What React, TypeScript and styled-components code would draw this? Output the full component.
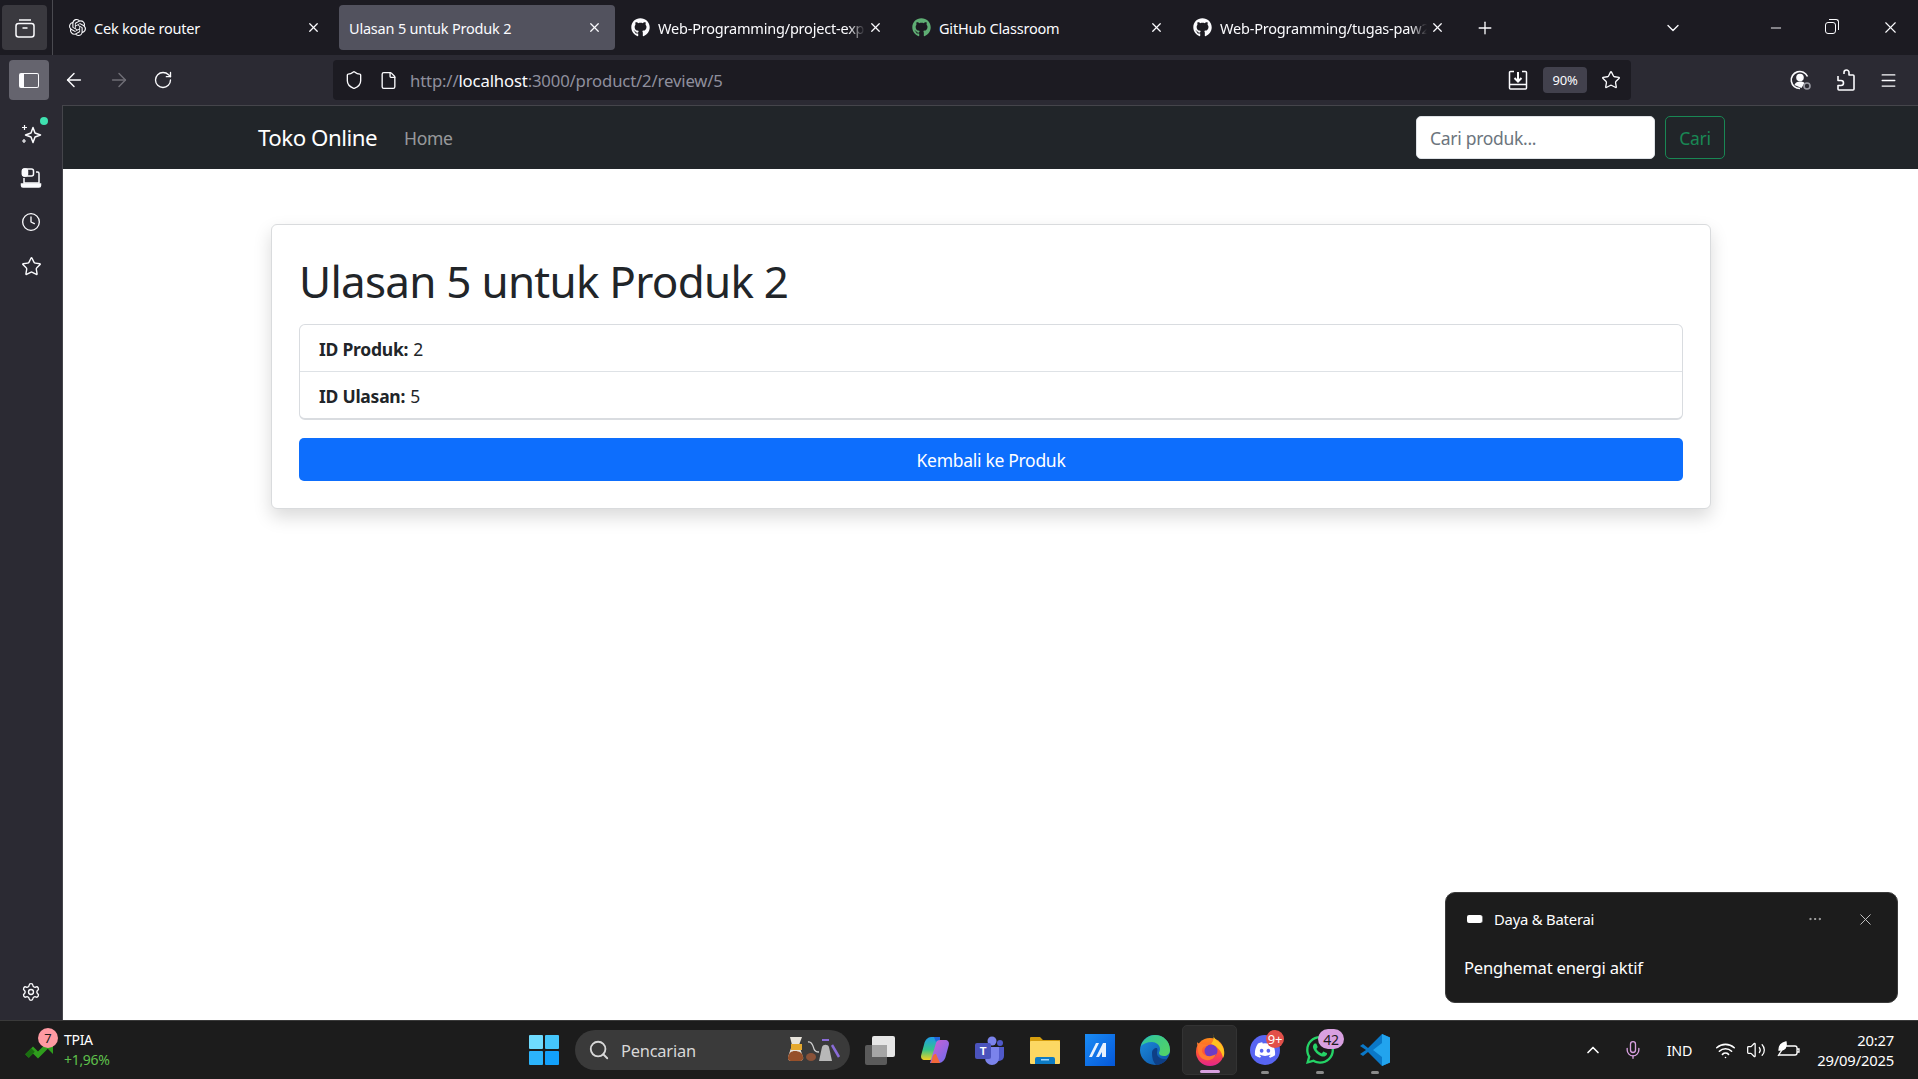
import styled, { createGlobalStyle } from 'styled-components';
import { ArrowLeft, ArrowRight, ChevronDown, ChevronUp, Clock, File, Menu, Minus, Mic, MoreHorizontal, Plus, RotateCw, Search, Settings, Shield, Star, Volume2, Wifi, X } from 'lucide-react';
import { FaDiscord, FaGithub, FaWhatsapp } from 'react-icons/fa';
import { SiOpenai } from 'react-icons/si';

const UI_FONT = '"Noto Sans", "Open Sans", sans-serif';

const GlobalStyle = createGlobalStyle`
  html, body { margin: 0; padding: 0; background: #fff; overflow: hidden; }
  * { box-sizing: border-box; }
  body { font-family: ${UI_FONT}; }
`;

const Screen = styled.div`
  width: 1918px;
  height: 1079px;
  display: flex;
  flex-direction: column;
  overflow: hidden;
`;

const TabBar = styled.div`
  height: 55px;
  flex: none;
  background: #1c1b22;
  display: flex;
  align-items: flex-start;
  padding: 5px 0 0 2px;
  color: #fbfbfe;
`;
const TabsButton = styled.div`
  width: 45px;
  height: 45px;
  background: #3a393f;
  border-radius: 4px;
  display: flex;
  align-items: center;
  justify-content: center;
`;
const TabDivider = styled.div`
  width: 1px;
  height: 55px;
  margin: -5px 5px 0 5px;
  background: #4a4a50;
`;
const Tabs = styled.div`
  display: flex;
  gap: 5px;
`;
const TabItem = styled.div<{ $active?: boolean }>`
  width: 276px;
  height: 45px;
  border-radius: 4px;
  background: ${(p) => (p.$active ? '#52525e' : 'transparent')};
  display: flex;
  align-items: center;
  padding: 0 13px 0 ${(p) => (p.$active ? '10px' : '11px')};
  gap: 8px;
  font-size: 14.5px;
  letter-spacing: -0.2px;
`;
const TabTitle = styled.span<{ $fade?: boolean }>`
  flex: 1;
  min-width: 0;
  margin-right: -5px;
  white-space: nowrap;
  overflow: hidden;
  ${(p) => p.$fade && 'mask-image: linear-gradient(to right, #000 92%, transparent 100%);'}
`;
const TabExtras = styled.div`
  display: flex;
  align-items: center;
  height: 45px;
  margin-left: 17px;
`;
const WindowControls = styled.div`
  display: flex;
  align-items: center;
  height: 45px;
  margin-left: 85px;
  gap: 41px;
  & > :last-child { margin-left: 4px; }
`;
const RestoreIcon = styled.div`
  width: 11px;
  height: 12px;
  border: 1.3px solid #fbfbfe;
  border-radius: 3px;
  position: relative;
  &::after {
    content: '';
    position: absolute;
    top: -4px;
    right: -4px;
    width: 9px;
    height: 10px;
    border-top: 1.3px solid #fbfbfe;
    border-right: 1.3px solid #fbfbfe;
    border-radius: 0 3px 0 0;
  }
`;

const Toolbar = styled.div`
  height: 50px;
  flex: none;
  background: #2b2a33;
  display: flex;
  align-items: center;
  padding: 5px 14px 5px 9px;
  color: #fbfbfe;
`;
const SidebarToggle = styled.div`
  width: 40px;
  height: 40px;
  background: #65646e;
  border-radius: 4px;
  display: flex;
  align-items: center;
  justify-content: center;
`;
const SidebarGlyph = styled.div`
  width: 20px;
  height: 15px;
  border: 1.5px solid #fbfbfe;
  border-left-width: 5px;
  border-radius: 2px;
  background: #65646e;
`;
const NavIcons = styled.div`
  display: flex;
  align-items: center;
  gap: 23px;
  padding-left: 14px;
  width: 284px;
  flex: none;
  & > * { flex: none; }
`;
const UrlBar = styled.div`
  width: 1298px;
  height: 40px;
  background: #1c1b22;
  border-radius: 4px;
  display: flex;
  align-items: center;
  padding: 0 10px 0 11px;
  gap: 15px;
`;
const UrlText = styled.div`
  flex: 1;
  margin-left: -3px;
  font-size: 16.7px;
  letter-spacing: -0.15px;
  color: #8f8f9d;
  white-space: nowrap;
  b { font-weight: 400; color: #fbfbfe; }
`;
const UrlActions = styled.div`
  display: flex;
  align-items: center;
`;
const ZoomBadge = styled.div`
  width: 44px;
  height: 26px;
  margin: 0 14px 0 15px;
  border-radius: 4px;
  background: #42414d;
  font-size: 13px;
  letter-spacing: -0.2px;
  display: flex;
  align-items: center;
  justify-content: center;
`;
const ToolbarRight = styled.div`
  display: flex;
  align-items: center;
  gap: 23px;
  margin-left: 158px;
`;

const Body = styled.div`
  flex: 1;
  display: flex;
  min-height: 0;
`;
const Sidebar = styled.div`
  width: 62px;
  flex: none;
  background: #2b2a33;
  display: flex;
  flex-direction: column;
  align-items: center;
  padding: 7px 0 6px;
  color: #fbfbfe;
`;
const SideItem = styled.div<{ $bottom?: boolean }>`
  width: 44px;
  height: 44px;
  display: flex;
  align-items: center;
  justify-content: center;
  position: relative;
  ${(p) => p.$bottom && 'margin-top: auto;'}
`;
const GreenDot = styled.span`
  position: absolute;
  top: 5px;
  right: 5px;
  width: 8px;
  height: 8px;
  border-radius: 50%;
  background: #3fe1b0;
`;

const Content = styled.div`
  flex: 1;
  position: relative;
  background: #fff;
  border-left: 1px solid #45454b;
  border-top: 1px solid #45454b;
`;
const Navbar = styled.nav`
  height: 63px;
  background: #212529;
  display: flex;
  align-items: center;
  padding: 0 193px 0 195px;
`;
const Brand = styled.span`
  font-size: 22.3px;
  letter-spacing: -0.5px;
  color: #fff;
`;
const NavLink = styled.span`
  margin-left: 27px;
  font-size: 17.5px;
  letter-spacing: -0.3px;
  color: rgba(255, 255, 255, 0.55);
`;
const SearchForm = styled.form`
  margin-left: auto;
  display: flex;
  gap: 10px;
`;
const SearchInput = styled.input`
  width: 239px;
  height: 43px;
  border: 1px solid #dee2e6;
  border-radius: 5px;
  padding: 0 13px;
  font-family: ${UI_FONT};
  font-size: 17.5px;
  letter-spacing: -0.3px;
  &::placeholder { color: #6c757d; opacity: 1; }
`;
const SearchButton = styled.button`
  width: 60px;
  height: 43px;
  background: transparent;
  border: 1px solid #198754;
  border-radius: 5px;
  color: #198754;
  font-family: ${UI_FONT};
  font-size: 17.5px;
  letter-spacing: -0.3px;
  padding: 0;
`;

const Card = styled.section`
  width: 1440px;
  height: 285px;
  margin: 55px 0 0 208px;
  background: #fff;
  border: 1px solid #d9dbdd;
  border-radius: 6px;
  padding: 27px 27px;
  box-shadow: 0 8px 18px rgba(0, 0, 0, 0.15);
`;
const Title = styled.h1`
  margin: 0 0 18px 0;
  height: 54px;
  line-height: 59px;
  font-size: 44px;
  font-weight: 400;
  letter-spacing: -0.75px;
  color: #212529;
  white-space: nowrap;
`;
const InfoList = styled.ul`
  list-style: none;
  margin: 0 0 18px;
  padding: 0;
  border: 1px solid #d9dce0;
  border-bottom-width: 2px;
  border-radius: 6px;
`;
const InfoItem = styled.li`
  height: 46px;
  padding: 2px 19px 0;
  display: flex;
  align-items: center;
  gap: 5px;
  font-size: 17.5px;
  letter-spacing: -0.25px;
  color: #212529;
  & + & { border-top: 1px solid #dee2e6; height: 47px; }
  strong { font-weight: 700; }
`;
const BackButton = styled.button`
  width: 100%;
  height: 43px;
  border: 0;
  border-radius: 5px;
  background: #0d6efd;
  color: #fff;
  font-family: ${UI_FONT};
  font-size: 17.5px;
  letter-spacing: -0.3px;
`;

const Toast = styled.div`
  position: absolute;
  right: 20px;
  bottom: 17px;
  width: 453px;
  height: 111px;
  background: #1c1c1c;
  border: 1px solid #3a3a3a;
  border-radius: 10px;
  color: #fff;
  padding: 0 20px;
  display: flex;
  flex-direction: column;
`;
const ToastHead = styled.div`
  display: flex;
  align-items: center;
  height: 52px;
  font-size: 14.8px;
  letter-spacing: -0.2px;
`;
const ToastTitle = styled.span`
  flex: 1;
  margin-left: 12px;
`;
const ToastActions = styled.div`
  display: flex;
  align-items: center;
  gap: 33px;
  margin-right: 2px;
  color: #c8c8c8;
`;
const ToastBody = styled.div`
  font-size: 16.6px;
  letter-spacing: -0.2px;
  margin: 11px 0 0 -2px;
`;
const BatteryGlyph = styled.span`
  margin-left: 1px;
  width: 15px;
  height: 8px;
  background: #fff;
  border-radius: 2px;
  box-shadow: 1.5px 0 0 -0.5px #777;
`;

const Taskbar = styled.footer`
  height: 59px;
  flex: none;
  background: #1c1c1c;
  border-top: 1px solid #3a3a3a;
  display: flex;
  align-items: center;
  color: #fff;
`;
const Widget = styled.div`
  width: 529px;
  flex: none;
  display: flex;
  align-items: center;
  padding-left: 25px;
  gap: 11px;
`;
const WidgetIcon = styled.div`
  position: relative;
  width: 28px;
  height: 36px;
  padding-top: 11px;
`;
const WidgetBadge = styled.span`
  position: absolute;
  left: 13px;
  top: -4px;
  width: 20px;
  height: 20px;
  border-radius: 50%;
  background: #ff9aa2;
  color: #1c1c1c;
  font-size: 13px;
  display: flex;
  align-items: center;
  justify-content: center;
`;
const WidgetText = styled.div`
  font-size: 14px;
  line-height: 20px;
  letter-spacing: -0.3px;
  small { display: block; font-size: 14px; color: #5fc04c; }
`;
const StartButton = styled.div`
  width: 30px;
  height: 30px;
  flex: none;
  display: grid;
  grid-template-columns: 1fr 1fr;
  gap: 1.5px;
`;
const StartPane = styled.span<{ $c: string }>`
  background: ${(p) => p.$c};
  border-radius: 1px;
`;
const SearchPill = styled.div`
  width: 275px;
  height: 40px;
  flex: none;
  margin-left: 16px;
  border-radius: 20px;
  background: #3a3a3a;
  display: flex;
  align-items: center;
  padding: 0 8px 0 13px;
  gap: 11px;
  font-size: 16.4px;
  letter-spacing: -0.2px;
  color: #d8d8d8;
`;
const PillText = styled.span`
  flex: 1;
`;
const Apps = styled.div`
  display: flex;
  align-items: center;
  margin-left: 2px;
`;
const AppSlot = styled.div<{ $active?: boolean }>`
  width: 55px;
  height: 50px;
  position: relative;
  display: flex;
  align-items: center;
  justify-content: center;
  border-radius: 5px;
  ${(p) => p.$active && 'background: #2a2a2a; border: 1px solid #333;'}
`;
const RunDot = styled.span<{ $active?: boolean }>`
  position: absolute;
  bottom: 1px;
  left: 50%;
  transform: translateX(-50%);
  width: ${(p) => (p.$active ? '20px' : '8px')};
  height: 3px;
  border-radius: 2px;
  background: ${(p) => (p.$active ? '#d8a0e0' : '#8a8a8a')};
`;
const AppBadge = styled.span<{ $bg: string; $wide?: boolean }>`
  position: absolute;
  top: ${(p) => (p.$wide ? '4px' : '5px')};
  right: ${(p) => (p.$wide ? '3px' : '8px')};
  min-width: ${(p) => (p.$wide ? '26px' : '18px')};
  height: ${(p) => (p.$wide ? '20px' : '18px')};
  border-radius: 10px;
  background: ${(p) => p.$bg};
  color: ${(p) => (p.$wide ? '#1c1c1c' : '#fff')};
  font-size: ${(p) => (p.$wide ? '14px' : '13px')};
  letter-spacing: -0.3px;
  display: flex;
  align-items: center;
  justify-content: center;
`;
const Tray = styled.div`
  display: flex;
  align-items: center;
  margin-left: auto;
  padding-right: 24px;
  color: #fff;
`;
const TrayLang = styled.span`
  font-size: 14.3px;
  letter-spacing: -0.2px;
  margin: 0 23px 0 24px;
`;
const TrayIcons = styled.div`
  display: flex;
  align-items: center;
  gap: 10px;
`;
const Clocks = styled.div`
  margin-left: 17px;
  font-size: 14.8px;
  line-height: 20px;
  letter-spacing: -0.2px;
  text-align: right;
`;
const DiscordCircle = styled.span`
  width: 30px;
  height: 30px;
  border-radius: 50%;
  background: #5865f2;
  display: flex;
  align-items: center;
  justify-content: center;
`;

const SparkIcon = () => (
  <svg width="22" height="22" viewBox="0 0 22 22" fill="none" stroke="#fbfbfe" strokeWidth="1.5" strokeLinejoin="round">
    <path d="M13 4.500l2 5.500 5.500 2-5.500 2-2 5.500-2-5.500-5.500-2 5.500-2z" />
    <path d="M4.500 2v5M2 4.500h5M4 16v4M2 18h4" strokeWidth="1.2" />
  </svg>
);

const SyncIcon = () => (
  <svg width="22" height="22" viewBox="0 0 22 22" fill="none" stroke="#fbfbfe" strokeWidth="1.5">
    <rect x="2.500" y="2" width="11" height="7" rx="2" />
    <rect x="2.500" y="2" width="5" height="7" rx="2" fill="#fbfbfe" />
    <path d="M16 5h1.500a1.500 1.500 0 011.500 1.500V16H4v-5" />
    <path d="M1.500 17h19v1.500a1.500 1.500 0 01-1.500 1.500H3a1.500 1.500 0 01-1.500-1.500z" fill="#fbfbfe" />
  </svg>
);

const TabsGlyph = () => (
  <svg width="20" height="20" viewBox="0 0 20 20" fill="none" stroke="#fbfbfe" strokeWidth="1.5">
    <rect x="1" y="5.500" width="18" height="13.500" rx="2.500" />
    <path d="M4 2h12M7.500 10h5" />
  </svg>
);

const DownloadIcon = () => (
  <svg width="20" height="20" viewBox="0 0 20 20" fill="none" stroke="#fbfbfe" strokeWidth="1.500">
    <path d="M6 1.500H2.500a1 1 0 00-1 1V18a1 1 0 001 1h15a1 1 0 001-1V2.500a1 1 0 00-1-1H14M1.500 14.500h17" />
    <path d="M10 2v8.500M6.500 8l3.500 3.500L13.500 8" strokeWidth="2" />
  </svg>
);

const AccountIcon = () => (
  <svg width="24" height="24" viewBox="0 0 24 24" fill="none" stroke="#fbfbfe" strokeWidth="1.600">
    <path d="M18.500 8.500A8.500 8.500 0 1011 20.500" />
    <circle cx="11" cy="9.500" r="3" fill="#fbfbfe" />
    <path d="M5.500 17c1-3 3-3.500 5.500-3.500s3.500.5 4.500 1.500L12.500 20z" fill="#fbfbfe" stroke="none" />
    <circle cx="18" cy="18" r="3" stroke="#9a9aa3" />
  </svg>
);

const PuzzleIcon = () => (
  <svg width="20" height="22" viewBox="0 0 20 22" fill="none" stroke="#fbfbfe" strokeWidth="1.600" strokeLinejoin="round">
    <path d="M8 5V3.500a2.500 2.500 0 015 0V6h4a1 1 0 011 1v13a1 1 0 01-1 1H3a1 1 0 01-1-1v-3.500h3a2.500 2.500 0 000-5H2V7" />
  </svg>
);

const LeafBattery = () => (
  <svg width="24" height="20" viewBox="0 0 24 20" fill="none" stroke="#fff" strokeWidth="1.300">
    <path d="M10 6h9a2 2 0 012 2v5a2 2 0 01-2 2H3" />
    <path d="M21 9h2v3h-2" />
    <path d="M3 10c0-5 3-7 7-8 1 5-1 8-5 8z" fill="#fff" />
    <path d="M2 16l6-9" />
  </svg>
);

const TrendIcon = () => (
  <svg width="28" height="16" viewBox="0 0 28 16" fill="none" style={{ display: 'block' }}>
    <path d="M2 13l6-6 5 5 9-9" stroke="#2f9e1d" strokeWidth="5" />
    <path d="M2 13l6-6" stroke="#1a6e10" strokeWidth="5" />
    <path d="M18 1h10v10z" fill="#2f9e1d" />
  </svg>
);

const TaskViewIcon = () => (
  <svg width="32" height="32" viewBox="0 0 32 32">
    <rect x="1" y="11" width="22" height="20" rx="2" fill="#5a5a5a" />
    <rect x="8" y="2" width="23" height="21" rx="2" fill="#e6e6e6" />
    <rect x="8" y="11" width="15" height="12" fill="#a5a5a5" />
  </svg>
);

const CopilotIcon = () => (
  <svg width="30" height="30" viewBox="0 0 30 30">
    <defs>
      <linearGradient id="cp1" x1="0" y1="0" x2="0" y2="1"><stop offset="0" stopColor="#1f9be8" /><stop offset="0.55" stopColor="#33c48a" /><stop offset="1" stopColor="#f5d020" /></linearGradient>
      <linearGradient id="cp2" x1="0" y1="0" x2="1" y2="1"><stop offset="0" stopColor="#d35fd0" /><stop offset="1" stopColor="#6a6cf0" /></linearGradient>
    </defs>
    <path d="M11 2h9l-6 20c-.6 2-2 3-4 3H5c-3 0-4.500-2-3.800-5l3-11C5 5 8 2 11 2z" fill="url(#cp1)" />
    <path d="M19 28h-9l6-20c.6-2 2-3 4-3h5c3 0 4.500 2 3.800 5l-3 11C25 25 22 28 19 28z" fill="url(#cp2)" />
    <path d="M11 28l2-7c.5-1.500 2-2 3-2l4 9z" fill="#f2683a" />
    <path d="M20 2h-6l2 5c.5-1.500 2-2 4-2z" fill="#2266dd" />
  </svg>
);

const TeamsIcon = () => (
  <svg width="32" height="32" viewBox="0 0 32 32">
    <circle cx="18" cy="7" r="4.500" fill="#7b83eb" />
    <circle cx="26" cy="9" r="3" fill="#5059c9" />
    <path d="M21 13h9v9a5 5 0 01-5 5h-4z" fill="#5059c9" />
    <path d="M10 13h15v11a7 7 0 01-14 0z" fill="#7b83eb" />
    <rect x="1" y="9" width="16" height="16" rx="2" fill="#4b53bc" />
    <text x="9" y="21" textAnchor="middle" fontFamily="Liberation Sans" fontSize="11" fontWeight="700" fill="#fff">T</text>
  </svg>
);

const FolderIcon = () => (
  <svg width="30" height="30" viewBox="0 0 30 30">
    <path d="M0 3a1 1 0 011-1h9l3 3h17v6H0z" fill="#d69e0e" />
    <rect x="0" y="6" width="30" height="23" rx="1" fill="#fcd863" />
    <path d="M5 29v-5a2 2 0 012-2h16a2 2 0 012 2v5z" fill="#0d7bc4" />
    <rect x="11" y="24" width="8" height="1.500" fill="#9fd8ff" />
  </svg>
);

const MaIcon = () => (
  <svg width="30" height="32" viewBox="0 0 30 32">
    <defs>
      <linearGradient id="ma" x1="0" y1="0" x2="1" y2="1"><stop offset="0" stopColor="#1a8cf5" /><stop offset="1" stopColor="#0457d9" /></linearGradient>
    </defs>
    <rect width="30" height="32" fill="url(#ma)" />
    <path d="M4 23l7-14h3l-7 14zM11 23l7-14h3v14h-4v-5l-3 5z" fill="#fff" opacity="0.9" />
  </svg>
);

const EdgeIcon = () => (
  <svg width="30" height="30" viewBox="0 0 30 30">
    <defs>
      <linearGradient id="ed1" x1="0" y1="0" x2="1" y2="0.600"><stop offset="0" stopColor="#2bc4a5" /><stop offset="1" stopColor="#50d16a" /></linearGradient>
      <linearGradient id="ed2" x1="0" y1="0" x2="1" y2="1"><stop offset="0" stopColor="#1d8fe0" /><stop offset="1" stopColor="#0b4fa3" /></linearGradient>
    </defs>
    <circle cx="15" cy="15" r="15" fill="url(#ed2)" />
    <path d="M1 11C3 4 9 0 15 0c8 0 15 6 15 15 0 4-3 6-6 6-3 0-5-1-5-3 0-1 1-2 1-4 0-4-4-7-8-7-5 0-9 2-11 4z" fill="url(#ed1)" />
    <path d="M12 18c0-3 2-5 5-5 1 2 0 3 0 5 0 4 4 6 8 6l2 .500C24 28 20 30 16 30c-3-3-4-7-4-12z" fill="#0e3f86" />
  </svg>
);

const FirefoxIcon = () => (
  <svg width="30" height="32" viewBox="0 0 30 32">
    <defs>
      <linearGradient id="ff1" x1="0.500" y1="0" x2="0.500" y2="1"><stop offset="0" stopColor="#ff8a1a" /><stop offset="0.550" stopColor="#ff4f3a" /><stop offset="1" stopColor="#e3248e" /></linearGradient>
    </defs>
    <circle cx="15" cy="18" r="14" fill="url(#ff1)" />
    <path d="M18 0c0 5 5 6 8 10 4 5 4 11 2 14-1-7-6-12-12-14 3-3 3-7 2-10z" fill="#ffc21f" />
    <circle cx="16" cy="17" r="6.500" fill="#6e3cc4" />
    <path d="M2 8c2 3 7 1 11 4-4 0-6 1-6 5 1 5 8 7 14 3-2 5-6 7-10 6-5-1-8-5-8-10 0-3-1-5-1-8z" fill="#ff7a2e" />
  </svg>
);

const VsCodeIcon = () => (
  <svg width="30" height="32" viewBox="0 0 30 32">
    <path d="M22 0l8 3.500v25L22 32 8 18l-5 4-3-2 6-4-6-4 3-2 5 4z" fill="#0a78c8" />
    <path d="M22 0l8 3.500v25L22 32zM22 9l-9 7 9 7z" fill="#22a4ee" fillRule="evenodd" />
  </svg>
);

const SearchDoodle = () => (
  <svg width="54" height="26" viewBox="0 0 54 26">
    <path d="M2 0h12l-3 8 4 12a3 3 0 01-3 4H3a3 3 0 01-3-4l4-12z" fill="#e8e4dc" />
    <rect x="3" y="7" width="11" height="6" fill="#e6a92e" />
    <path d="M0 20c1-4 3-6 7-6s8 2 8 6a3 3 0 01-3 4H3a3 3 0 01-3-4z" fill="#96502a" />
    <ellipse cx="23" cy="20" rx="5" ry="4" fill="#8a5238" />
    <path d="M20 5c4-1 5 4 6 7s3 3 5 3" fill="none" stroke="#d0d0d0" strokeWidth="1.300" />
    <path d="M31 24l3-14c1-3 6-3 7 0l3 14z" fill="#b8b8b8" />
    <path d="M34 2h7v2h-7z" fill="#8a6cd8" />
    <path d="M44 8l7 12" stroke="#8a6cd8" strokeWidth="2.500" />
  </svg>
);

const TABS = [
  { title: 'Cek kode router', icon: <SiOpenai size={17} /> },
  { title: 'Ulasan 5 untuk Produk 2', active: true },
  { title: 'Web-Programming/project-expl', icon: <FaGithub size={19} />, fade: true },
  { title: 'GitHub Classroom', icon: <FaGithub size={19} color="#5fae74" /> },
  { title: 'Web-Programming/tugas-paw2', icon: <FaGithub size={19} />, fade: true },
];

const APPS = [
  { key: 'taskview', icon: <TaskViewIcon /> },
  { key: 'copilot', icon: <CopilotIcon /> },
  { key: 'teams', icon: <TeamsIcon /> },
  { key: 'explorer', icon: <FolderIcon /> },
  { key: 'ma', icon: <MaIcon /> },
  { key: 'edge', icon: <EdgeIcon /> },
  { key: 'firefox', icon: <FirefoxIcon />, running: true, active: true },
  {
    key: 'discord',
    icon: (
      <DiscordCircle>
        <FaDiscord size={22} color="#fff" />
      </DiscordCircle>
    ),
    running: true,
    badge: '9+',
    badgeBg: '#e2504a',
  },
  { key: 'whatsapp', icon: <FaWhatsapp size={32} color="#25d366" />, running: true, badge: '42', badgeBg: '#d8a0e0', wide: true },
  { key: 'vscode', icon: <VsCodeIcon />, running: true },
];

function App() {
  return (
    <Screen>
      <GlobalStyle />
      <TabBar>
        <TabsButton>
          <TabsGlyph />
        </TabsButton>
        <TabDivider />
        <Tabs>
          {TABS.map((tab) => (
            <TabItem key={tab.title} $active={tab.active}>
              {tab.icon}
              <TabTitle $fade={tab.fade}>{tab.title}</TabTitle>
              <X size={15} strokeWidth={2} />
            </TabItem>
          ))}
        </Tabs>
        <TabExtras>
          <Plus size={20} strokeWidth={1.6} />
          <ChevronDown size={20} strokeWidth={1.6} style={{ marginLeft: 168 }} />
        </TabExtras>
        <WindowControls>
          <Minus size={16} strokeWidth={1.4} />
          <RestoreIcon />
          <X size={19} strokeWidth={1.4} />
        </WindowControls>
      </TabBar>

      <Toolbar>
        <SidebarToggle>
          <SidebarGlyph />
        </SidebarToggle>
        <NavIcons>
          <ArrowLeft size={22} strokeWidth={1.6} />
          <ArrowRight size={22} strokeWidth={1.6} color="#6f6e76" />
          <RotateCw size={20} strokeWidth={1.6} />
        </NavIcons>
        <UrlBar>
          <Shield size={20} strokeWidth={1.6} />
          <File size={19} strokeWidth={1.7} />
          <UrlText>
            http://<b>localhost</b>:3000/product/2/review/5
          </UrlText>
          <UrlActions>
            <DownloadIcon />
            <ZoomBadge>90%</ZoomBadge>
            <Star size={20} strokeWidth={1.6} />
          </UrlActions>
        </UrlBar>
        <ToolbarRight>
          <AccountIcon />
          <PuzzleIcon />
          <Menu size={19} strokeWidth={1.6} />
        </ToolbarRight>
      </Toolbar>

      <Body>
        <Sidebar>
          <SideItem>
            <SparkIcon />
            <GreenDot />
          </SideItem>
          <SideItem>
            <SyncIcon />
          </SideItem>
          <SideItem>
            <Clock size={20} strokeWidth={1.6} />
          </SideItem>
          <SideItem>
            <Star size={21} strokeWidth={1.6} />
          </SideItem>
          <SideItem $bottom>
            <Settings size={20} strokeWidth={1.6} />
          </SideItem>
        </Sidebar>
        <Content>
          <Navbar>
            <Brand>Toko Online</Brand>
            <NavLink>Home</NavLink>
            <SearchForm>
              <SearchInput placeholder="Cari produk..." />
              <SearchButton type="button">Cari</SearchButton>
            </SearchForm>
          </Navbar>
          <Card>
            <Title>Ulasan 5 untuk Produk 2</Title>
            <InfoList>
              <InfoItem>
                <strong>ID Produk:</strong> 2
              </InfoItem>
              <InfoItem>
                <strong>ID Ulasan:</strong> 5
              </InfoItem>
            </InfoList>
            <BackButton type="button">Kembali ke Produk</BackButton>
          </Card>
          <Toast>
            <ToastHead>
              <BatteryGlyph />
              <ToastTitle>Daya &amp; Baterai</ToastTitle>
              <ToastActions>
                <MoreHorizontal size={16} strokeWidth={1.2} />
                <X size={19} strokeWidth={1.2} />
              </ToastActions>
            </ToastHead>
            <ToastBody>Penghemat energi aktif</ToastBody>
          </Toast>
        </Content>
      </Body>

      <Taskbar>
        <Widget>
          <WidgetIcon>
            <TrendIcon />
            <WidgetBadge>7</WidgetBadge>
          </WidgetIcon>
          <WidgetText>
            TPIA
            <small>+1,96%</small>
          </WidgetText>
        </Widget>
        <StartButton>
          <StartPane $c="#6fdcff" />
          <StartPane $c="#45c6fb" />
          <StartPane $c="#2cb4fb" />
          <StartPane $c="#12a0fa" />
        </StartButton>
        <SearchPill>
          <Search size={22} strokeWidth={2} />
          <PillText>Pencarian</PillText>
          <SearchDoodle />
        </SearchPill>
        <Apps>
          {APPS.map((app) => (
            <AppSlot key={app.key} $active={app.active}>
              {app.icon}
              {app.badge && (
                <AppBadge $bg={app.badgeBg as string} $wide={app.wide}>
                  {app.badge}
                </AppBadge>
              )}
              {app.running && <RunDot $active={app.active} />}
            </AppSlot>
          ))}
        </Apps>
        <Tray>
          <ChevronUp size={20} strokeWidth={2} />
          <Mic size={20} strokeWidth={1.6} color="#d8a0e0" style={{ marginLeft: 20 }} />
          <TrayLang>IND</TrayLang>
          <TrayIcons>
            <Wifi size={21} strokeWidth={1.8} />
            <Volume2 size={20} strokeWidth={1.5} />
            <LeafBattery />
          </TrayIcons>
          <Clocks>
            20:27
            <br />
            29/09/2025
          </Clocks>
        </Tray>
      </Taskbar>
    </Screen>
  );
}

export default App;
